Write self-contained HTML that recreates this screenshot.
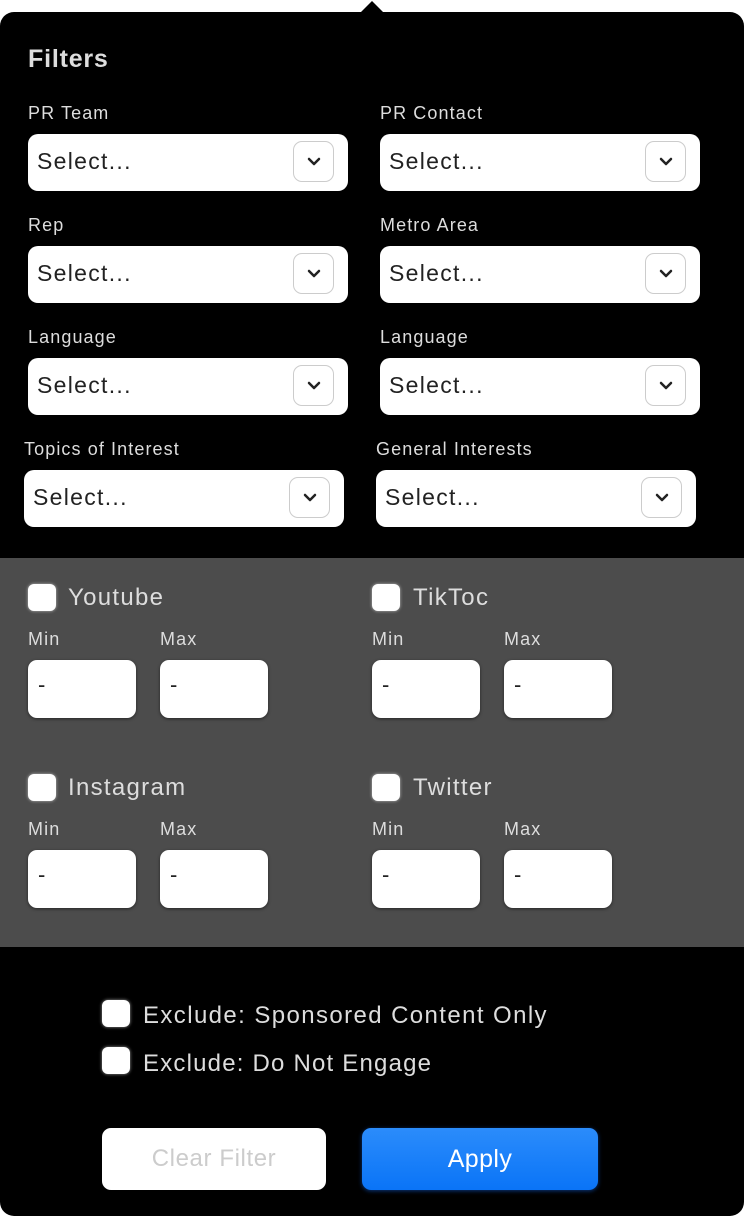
<!DOCTYPE html>
<html><head><style>
*{margin:0;padding:0;box-sizing:border-box}
body{width:744px;height:1216px;background:#fff;position:relative;overflow:hidden;font-family:"Liberation Sans",sans-serif}
.a{position:absolute}
.panel{left:0;top:12px;width:744px;height:1204px;background:#000;border-radius:14px 14px 14px 14px}
.gray{left:0;top:558px;width:744px;height:389px;background:#4c4c4c}
.lbl{color:#ddd;font-size:18px;letter-spacing:1.1px}
.sel{background:#fff;border-radius:10px;height:57px;width:320px}
.sel span{position:absolute;left:9px;top:14px;font-size:23px;color:#222;letter-spacing:1.3px}
.chev{position:absolute;right:14px;top:7px;width:41px;height:41px;border:1px solid #ccc;border-radius:9px;background:#fff}
.chev svg{position:absolute;left:12px;top:12px}
.cb{width:28px;height:27px;background:#fff;border-radius:6px;box-shadow:0 0 3px rgba(255,255,255,.6)}
.big{color:#ddd;font-size:24px;letter-spacing:1.3px}
.inp{width:108px;height:58px;background:#fff;border-radius:9px;box-shadow:0 1px 3px rgba(0,0,0,.5)}
.inp span{position:absolute;left:10px;top:12px;font-size:22px;color:#222}
</style></head><body>
<div class="a panel"></div>
<svg class="a" style="left:360px;top:0" width="24" height="14"><polygon points="0,13 12,1 24,13" fill="#000"/></svg>
<div class="a" style="left:28px;top:45px;color:#ddd;font-weight:bold;font-size:25px;letter-spacing:.8px">Filters</div>

<div class="a lbl" style="left:28px;top:103px">PR Team</div>
<div class="a lbl" style="left:380px;top:103px">PR Contact</div>
<div class="a sel" style="left:28px;top:134px"><span>Select...</span><div class="chev"><svg width="16" height="16"><path d="M3 5l5 5 5-5" stroke="#222" stroke-width="2.5" fill="none" stroke-linecap="round" stroke-linejoin="round"/></svg></div></div>
<div class="a sel" style="left:380px;top:134px"><span>Select...</span><div class="chev"><svg width="16" height="16"><path d="M3 5l5 5 5-5" stroke="#222" stroke-width="2.5" fill="none" stroke-linecap="round" stroke-linejoin="round"/></svg></div></div>

<div class="a lbl" style="left:28px;top:215px">Rep</div>
<div class="a lbl" style="left:380px;top:215px">Metro Area</div>
<div class="a sel" style="left:28px;top:246px"><span>Select...</span><div class="chev"><svg width="16" height="16"><path d="M3 5l5 5 5-5" stroke="#222" stroke-width="2.5" fill="none" stroke-linecap="round" stroke-linejoin="round"/></svg></div></div>
<div class="a sel" style="left:380px;top:246px"><span>Select...</span><div class="chev"><svg width="16" height="16"><path d="M3 5l5 5 5-5" stroke="#222" stroke-width="2.5" fill="none" stroke-linecap="round" stroke-linejoin="round"/></svg></div></div>

<div class="a lbl" style="left:28px;top:327px">Language</div>
<div class="a lbl" style="left:380px;top:327px">Language</div>
<div class="a sel" style="left:28px;top:358px"><span>Select...</span><div class="chev"><svg width="16" height="16"><path d="M3 5l5 5 5-5" stroke="#222" stroke-width="2.5" fill="none" stroke-linecap="round" stroke-linejoin="round"/></svg></div></div>
<div class="a sel" style="left:380px;top:358px"><span>Select...</span><div class="chev"><svg width="16" height="16"><path d="M3 5l5 5 5-5" stroke="#222" stroke-width="2.5" fill="none" stroke-linecap="round" stroke-linejoin="round"/></svg></div></div>

<div class="a lbl" style="left:24px;top:439px">Topics of Interest</div>
<div class="a lbl" style="left:376px;top:439px">General Interests</div>
<div class="a sel" style="left:24px;top:470px"><span>Select...</span><div class="chev"><svg width="16" height="16"><path d="M3 5l5 5 5-5" stroke="#222" stroke-width="2.5" fill="none" stroke-linecap="round" stroke-linejoin="round"/></svg></div></div>
<div class="a sel" style="left:376px;top:470px"><span>Select...</span><div class="chev"><svg width="16" height="16"><path d="M3 5l5 5 5-5" stroke="#222" stroke-width="2.5" fill="none" stroke-linecap="round" stroke-linejoin="round"/></svg></div></div>

<div class="a gray"></div>
<div class="a cb" style="left:28px;top:584px"></div><div class="a big" style="left:68px;top:584px">Youtube</div>
<div class="a cb" style="left:372px;top:584px"></div><div class="a big" style="left:413px;top:584px">TikToc</div>
<div class="a lbl" style="left:28px;top:629px">Min</div><div class="a lbl" style="left:160px;top:629px">Max</div>
<div class="a lbl" style="left:372px;top:629px">Min</div><div class="a lbl" style="left:504px;top:629px">Max</div>
<div class="a inp" style="left:28px;top:660px"><span>-</span></div><div class="a inp" style="left:160px;top:660px"><span>-</span></div>
<div class="a inp" style="left:372px;top:660px"><span>-</span></div><div class="a inp" style="left:504px;top:660px"><span>-</span></div>

<div class="a cb" style="left:28px;top:774px"></div><div class="a big" style="left:68px;top:774px">Instagram</div>
<div class="a cb" style="left:372px;top:774px"></div><div class="a big" style="left:413px;top:774px">Twitter</div>
<div class="a lbl" style="left:28px;top:819px">Min</div><div class="a lbl" style="left:160px;top:819px">Max</div>
<div class="a lbl" style="left:372px;top:819px">Min</div><div class="a lbl" style="left:504px;top:819px">Max</div>
<div class="a inp" style="left:28px;top:850px"><span>-</span></div><div class="a inp" style="left:160px;top:850px"><span>-</span></div>
<div class="a inp" style="left:372px;top:850px"><span>-</span></div><div class="a inp" style="left:504px;top:850px"><span>-</span></div>

<div class="a cb" style="left:102px;top:1000px"></div><div class="a big" style="left:143px;top:1002px;letter-spacing:1.4px">Exclude: Sponsored Content Only</div>
<div class="a cb" style="left:102px;top:1047px"></div><div class="a big" style="left:143px;top:1050px;letter-spacing:1.2px">Exclude: Do Not Engage</div>

<div class="a" style="left:102px;top:1128px;width:224px;height:62px;background:#fff;border-radius:9px;color:#ccc;font-size:24px;letter-spacing:.6px;text-align:center;line-height:62px">Clear Filter</div>
<div class="a" style="left:362px;top:1128px;width:236px;height:62px;background:linear-gradient(#2b8cfb,#0a74f7);border-radius:9px;color:#fff;font-size:25px;letter-spacing:.4px;text-align:center;line-height:62px;box-shadow:0 1px 4px rgba(20,110,250,.5)">Apply</div>
</body></html>
